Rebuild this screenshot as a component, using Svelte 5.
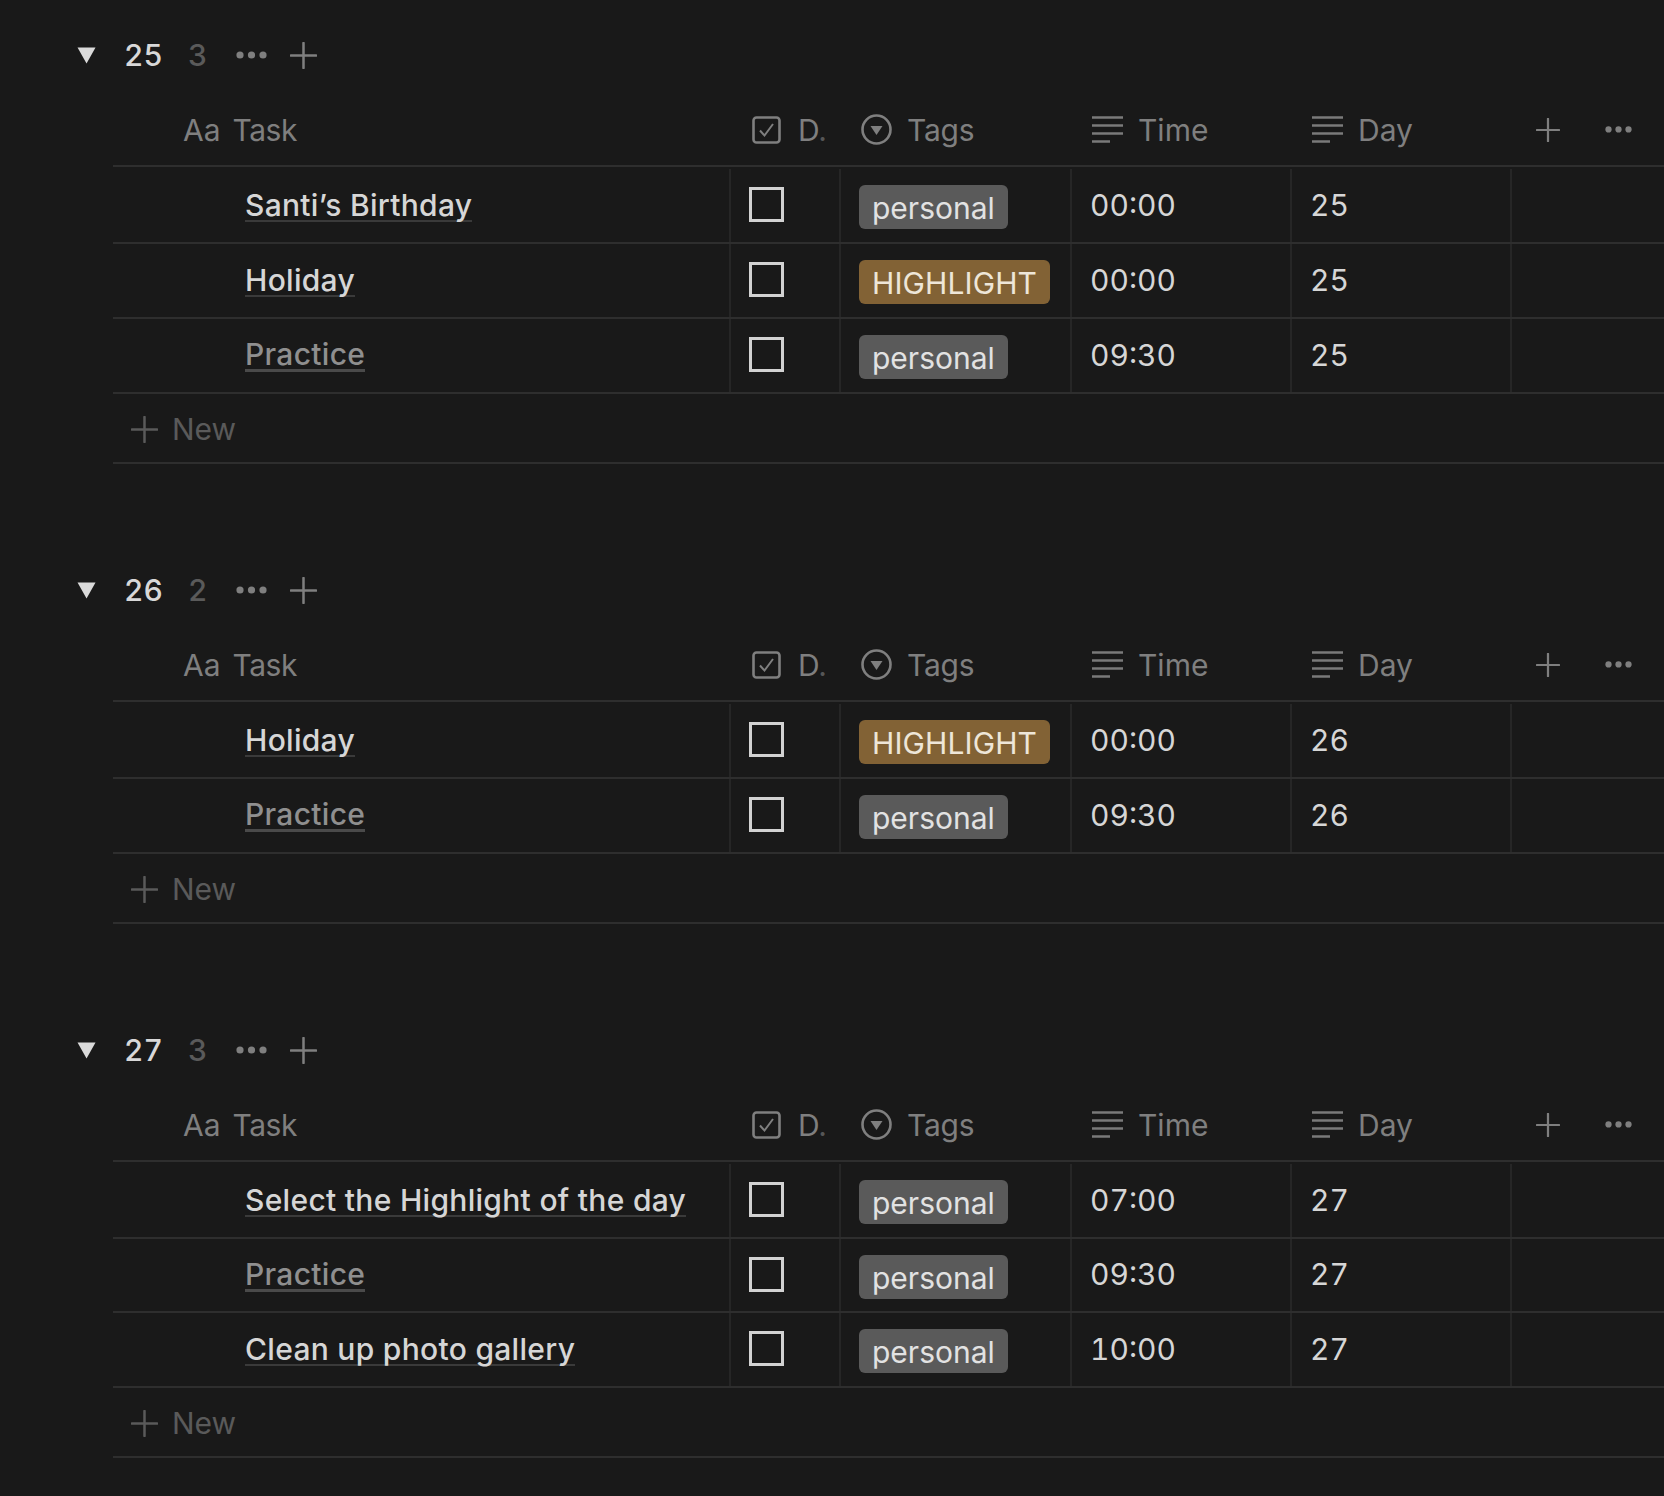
<script>
  const groups = [
    { day: 25, rows: [
      { name: "Santi’s Birthday", tag: "personal", time: "00:00" },
      { name: "Holiday", tag: "HIGHLIGHT", time: "00:00" },
      { name: "Practice", tag: "personal", time: "09:30", dim: true }
    ]},
    { day: 26, rows: [
      { name: "Holiday", tag: "HIGHLIGHT", time: "00:00" },
      { name: "Practice", tag: "personal", time: "09:30", dim: true }
    ]},
    { day: 27, rows: [
      { name: "Select the Highlight of the day", tag: "personal", time: "07:00" },
      { name: "Practice", tag: "personal", time: "09:30", dim: true },
      { name: "Clean up photo gallery", tag: "personal", time: "10:00" }
    ]}
  ];
</script>

{#snippet lines()}
  <svg class="ic" width="31" height="27" viewBox="0 0 31 27"><path d="M0 1.5H31M0 9.5H31M0 17.5H31M0 25.5H18" stroke="#7a7a7a" stroke-width="2.6" fill="none"/></svg>
{/snippet}
{#snippet plus(size, color)}
  <svg class="ic" width={size} height={size} viewBox="0 0 28 28"><path d="M14 1V27M1 14H27" stroke={color} stroke-width="2.6" stroke-linecap="round" fill="none"/></svg>
{/snippet}
{#snippet dots(color, w)}
  <svg class="ic" width={w} height={w * 8 / 31} viewBox="0 0 31 8"><circle cx="4" cy="4" r="3.6" fill={color}/><circle cx="15.5" cy="4" r="3.6" fill={color}/><circle cx="27" cy="4" r="3.6" fill={color}/></svg>
{/snippet}

<main class="page">
  {#each groups as g}
    <section class="group">
      <div class="ghead">
        <svg class="tri" width="19" height="17" viewBox="0 0 19 17"><path d="M0.5 0.5H18.5L9.5 16.5Z" fill="#dadada"/></svg>
        <span class="gnum">{g.day}</span>
        <span class="gcount">{g.rows.length}</span>
        <span class="gdots">{@render dots("#7f7f7f", 31)}</span>
        {@render plus(27, "#7f7f7f")}
      </div>
      <div class="table">
        <div class="row head">
          <div class="hc taskh"><span class="aa">Aa</span><span class="tasklabel">Task</span></div>
          <div class="hc doneh">
            <svg class="ic" width="29" height="28" viewBox="0 0 29 28"><rect x="1.5" y="1.5" width="26" height="25" rx="3" stroke="#7f7f7f" stroke-width="2.6" fill="none"/><path d="M8 14.5L12.5 19.5L21 8" stroke="#7f7f7f" stroke-width="2" fill="none"/></svg>
            <span>D<span class="fade">.</span></span>
          </div>
          <div class="hc tagsh">
            <svg class="ic" width="31" height="31" viewBox="0 0 31 31"><circle cx="15.5" cy="15.5" r="14" stroke="#7f7f7f" stroke-width="2.6" fill="none"/><path d="M9.5 12H21.5L15.5 21Z" fill="#7f7f7f"/></svg>
            <span class="tagslabel">Tags</span>
          </div>
          <div class="hc texth">{@render lines()}<span>Time</span></div>
          <div class="hc texth">{@render lines()}<span>Day</span></div>
          <div class="hc actions">
            {@render plus(24, "#7f7f7f")}
            {@render dots("#7f7f7f", 27)}
          </div>
        </div>
        {#each g.rows as r}
          <div class="row item">
            <div class="cell namec"><span class="name" class:dim={r.dim}>{r.name}</span></div>
            <div class="cell boxc"><span class="box"></span></div>
            <div class="cell tagc"><span class="tag" class:hl={r.tag === "HIGHLIGHT"}>{r.tag}</span></div>
            <div class="cell val">{r.time}</div>
            <div class="cell val">{g.day}</div>
            <div class="cell last"></div>
          </div>
        {/each}
        <div class="newrow">{@render plus(27, "#5a5a5a")}<span>New</span></div>
      </div>
    </section>
  {/each}
</main>

<style>
  :global(body) {
    margin: 0;
    background: #191919;
  }
  .page {
    width: 1664px;
    height: 1496px;
    overflow: hidden;
    background: #191919;
    font-family: Inter, "Liberation Sans", sans-serif;
    font-size: 30px;
    color: #d6d6d6;
    padding-top: 25px;
    box-sizing: border-box;
  }
  .group {
    margin-bottom: 96px;
  }
  .ic {
    display: block;
    flex: none;
  }
  .ghead {
    display: flex;
    align-items: center;
    height: 60px;
    padding-left: 77px;
  }
  .tri { margin-right: 28px; }
  .gnum { font-weight: 500; color: #d8d8d8; width: 64px; font-variant-numeric: tabular-nums; }
  .gcount { color: #5a5a5a; width: 48px; font-weight: 500; font-variant-numeric: tabular-nums; }
  .gdots { margin-right: 23px; }
  .table { margin-left: 113px; }
  .row {
    display: grid;
    grid-template-columns: 618px 110px 231px 220px 220px 152px;
  }
  .head {
    height: 69px;
    margin-top: 11px;
    border-bottom: 2px solid #2e2e2e;
    color: #7f7f7f;
    margin-bottom: 2px;
  }
  .hc {
    display: flex;
    align-items: center;
    padding-bottom: 2px;
  }
  .taskh { padding-left: 70px; gap: 12px; }
  .tasklabel { letter-spacing: -0.5px; }
  .tagslabel { letter-spacing: -0.2px; }
  .doneh { padding-left: 21px; gap: 17px; overflow: hidden; }
  .fade { opacity: 0.6; }
  .tagsh { padding-left: 20px; gap: 15px; }
  .texth { padding-left: 20px; gap: 15px; }
  .actions { padding-left: 24px; gap: 45px; }
  .item {
    height: 73px;
    border-bottom: 2px solid #2e2e2e;
  }
  .group:last-child .item:nth-child(3) {
    height: 72px;
  }
  .cell {
    display: flex;
    align-items: center;
    border-right: 2px solid #262626;
    box-sizing: border-box;
    min-width: 0;
  }
  .last { border-right: none; }
  .namec { padding-left: 132px; padding-top: 1px; }
  .name {
    font-weight: 550;
    letter-spacing: 0.3px;
    color: #d6d6d6;
    line-height: 29px;
    border-bottom: 2px solid #3a3a3a;
  }
  .name.dim {
    color: #8f8f8f;
    border-bottom: 3px solid #4a4a4a;
  }
  .boxc { padding-left: 18px; padding-bottom: 2px; }
  .box {
    display: block;
    width: 35px;
    height: 35px;
    box-sizing: border-box;
    border: 3px solid #d2d2d2;
  }
  .tagc { padding-left: 18px; }
  .tag {
    display: block;
    background: #5a5a5a;
    color: #e2e2e2;
    height: 44px;
    line-height: 46px;
    padding: 0 13px;
    border-radius: 6px;
    margin-top: 3px;
  }
  .tag.hl {
    background: #826235;
    color: #eee6d8;
    letter-spacing: 0.1px;
  }
  .val {
    padding-left: 18px;
    padding-bottom: 2px;
    color: #d6d6d6;
    font-variant-numeric: tabular-nums;
  }
  .newrow {
    display: flex;
    align-items: center;
    gap: 14px;
    height: 66px;
    padding-top: 2px;
    padding-left: 18px;
    border-bottom: 2px solid #2e2e2e;
    color: #5a5a5a;
  }
</style>
